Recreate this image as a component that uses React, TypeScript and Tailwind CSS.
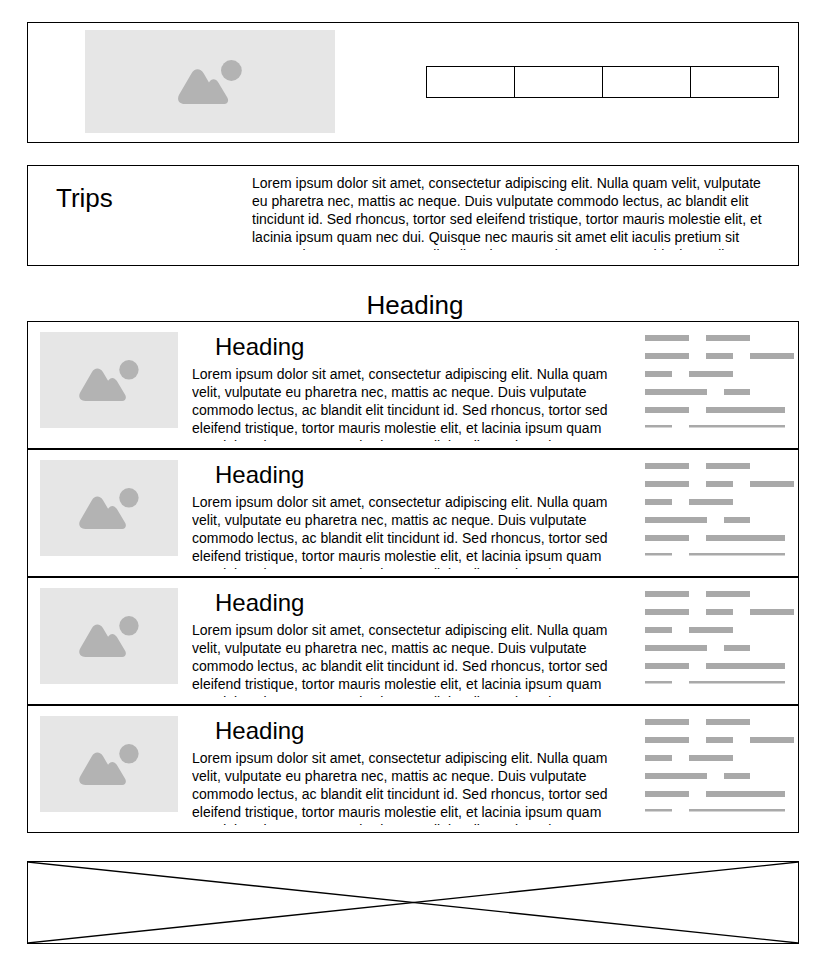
const LOREM =
  "Lorem ipsum dolor sit amet, consectetur adipiscing elit. Nulla quam velit, vulputate eu pharetra nec, mattis ac neque. Duis vulputate commodo lectus, ac blandit elit tincidunt id. Sed rhoncus, tortor sed eleifend tristique, tortor mauris molestie elit, et lacinia ipsum quam nec dui. Quisque nec mauris sit amet elit iaculis pretium sit amet quis magna. Aenean velit odio, elementum in tempus ut, vehicula eu diam. Pellentesque rhoncus aliquam mattis.";

const NAV_ITEMS = ["First", "Second", "Third", "Fourth"];

// Each inner list is one line of placeholder words.
const SKELETON_LINES = [
  ["w-[44px]", "w-[44px]"],
  ["w-[44px]", "w-[27px]", "w-[44px]"],
  ["w-[27px]", "w-[44px]"],
  ["w-[62px]", "w-[26px]"],
  ["w-[44px]", "w-[79px]"],
];

function Picture({ className, iconClassName }: { className: string; iconClassName: string }) {
  return (
    <div className={`flex shrink-0 items-center justify-center bg-[#e6e6e6] ${className}`}>
      <svg viewBox="0 0 64 44" className={iconClassName} fill="#b3b3b3" aria-hidden="true">
        <circle cx="53.4" cy="10.5" r="10.4" />
        <path d="M1.2 34.5 L13.6 13.2 C16.5 7.8 22.5 7.8 25.6 13.2 L31 22.4 C33.5 18.2 37.6 18.2 40.3 22.4 L49.3 37.4 C51.2 40.6 49.6 43.9 46.2 43.9 H6.6 C1 43.9 -1.6 39.4 1.2 34.5 Z" />
      </svg>
    </div>
  );
}

function Skeleton() {
  return (
    <div className="flex w-[149px] shrink-0 flex-col gap-3 pt-[13px]" aria-hidden="true">
      {SKELETON_LINES.map((words, i) => (
        <div key={i} className="flex gap-[17px]">
          {words.map((width, j) => (
            <div key={j} className={`h-[6px] bg-[#a9a9a9] ${width}`} />
          ))}
        </div>
      ))}
      <div className="flex gap-[17px]">
        <div className="h-[3px] w-[27px] border-b border-[#d4d4d4] bg-[#a9a9a9]" />
        <div className="h-[3px] w-[96px] border-b border-[#d4d4d4] bg-[#a9a9a9]" />
      </div>
    </div>
  );
}

function TripCard() {
  return (
    <article className="flex border border-black pr-1 pl-3">
      <Picture className="mt-[10px] h-[96px] w-[138px]" iconClassName="h-[41px] w-[60px]" />
      <div className="mr-7 ml-[14px] min-w-0 flex-1 pt-[11px] pb-[7px]">
        <h3 className="mb-1 pl-[23px] text-[24px] leading-[28px]">Heading</h3>
        <p className="h-[76px] overflow-hidden text-[14px] leading-[18px]">{LOREM}</p>
      </div>
      <Skeleton />
    </article>
  );
}

export default function App() {
  return (
    <div className="bg-white pt-[22px] pr-[25px] pb-[29px] pl-[27px] font-['Liberation_Sans',Arial,sans-serif] text-black">
      <header className="flex items-center justify-between border border-black pt-[7px] pr-[19px] pb-[9px] pl-[57px]">
        <Picture className="h-[103px] w-[250px]" iconClassName="h-[44px] w-[64px]" />
        <nav aria-label="Main">
          <ul className="flex border-y border-l border-black">
            {NAV_ITEMS.map((item) => (
              <li key={item} className="h-[30px] w-[88px] border-r border-black">
                <a href="#" aria-label={item} className="block h-full" />
              </li>
            ))}
          </ul>
        </nav>
      </header>

      <main>
        <section className="mt-[22px] flex border border-black pt-2 pr-[30px] pb-[15px] pl-7">
          <h1 className="w-[196px] shrink-0 pt-[9px] text-[26px] leading-[30px]">Trips</h1>
          <p className="h-[76px] flex-1 overflow-hidden text-[14px] leading-[18px]">{LOREM}</p>
        </section>

        <section className="mt-[23px]">
          <h2 className="pl-1 text-center text-[26px] leading-[32px]">Heading</h2>
          <TripCard />
          <TripCard />
          <TripCard />
          <TripCard />
        </section>
      </main>

      <footer className="mt-7 border border-black">
        <svg className="block h-[81px] w-full" stroke="black" strokeWidth="1.3" aria-hidden="true">
          <line x1="0" y1="0" x2="100%" y2="100%" />
          <line x1="0" y1="100%" x2="100%" y2="0" />
        </svg>
      </footer>
    </div>
  );
}
